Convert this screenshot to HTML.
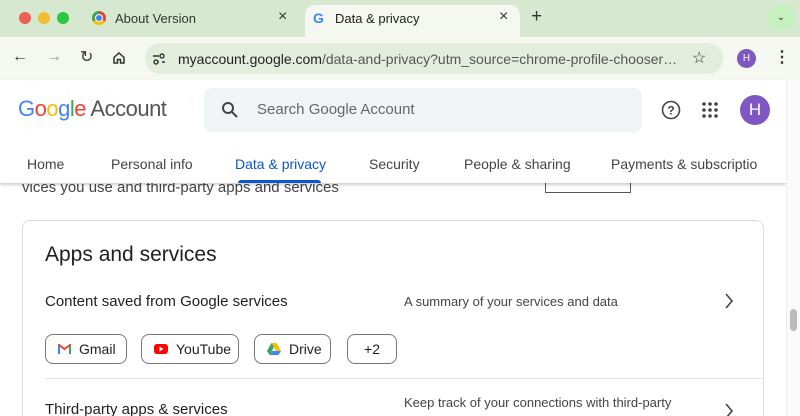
<!DOCTYPE html>
<html><head><meta charset="utf-8"><style>
*{box-sizing:border-box;margin:0;padding:0}
html,body{width:800px;height:416px;overflow:hidden}
body{font-family:"Liberation Sans",sans-serif;background:#fff;position:relative;color:#1f1f1f}
.abs{position:absolute}
.tabbar{left:0;top:0;width:800px;height:37px;background:#d6e8cf}
.toolbar{left:0;top:37px;width:800px;height:43px;background:#f4f8f0}
.dot{width:12px;height:12px;border-radius:50%;top:12px}
.tab{top:5px;height:32px;background:#f4f8f0;border-radius:10px 10px 0 0}
.omni{left:145px;top:43px;width:578px;height:31px;background:#e3eddd;border-radius:16px}
.t13{font-size:13px}
.nav{top:156px;font-size:14px;color:#444}
.chip{top:334px;height:30px;border:1px solid #747775;border-radius:8px;font-size:14px;display:flex;align-items:center;padding:0 12px;gap:8px;color:#1f1f1f}
.chip svg{flex-shrink:0}
</style></head><body>
<div class="abs tabbar"></div>
<div class="abs dot" style="left:19px;background:#ee5f57"></div>
<div class="abs dot" style="left:38px;background:#f4bc2f"></div>
<div class="abs dot" style="left:57px;background:#2ac741"></div>
<div class="abs" style="left:92px;top:11px;width:14px;height:14px;border-radius:50%;background:conic-gradient(#ea4335 0 120deg,#fbbc04 120deg 240deg,#34a853 240deg);"></div>
<div class="abs" style="left:96px;top:15px;width:6px;height:6px;border-radius:50%;background:#4285f4;box-shadow:0 0 0 1px #fff"></div>
<div class="abs t13" style="left:115px;top:11px;color:#333">About Version</div>
<div class="abs" style="left:278px;top:8px;font-size:16px;color:#333">×</div>
<div class="abs tab" style="left:305px;width:215px"></div>
<div class="abs" style="left:313px;top:10px;font-size:14px;font-weight:bold;color:#4285f4">G</div>
<div class="abs t13" style="left:335px;top:11px">Data &amp; privacy</div>
<div class="abs" style="left:499px;top:8px;font-size:16px;color:#333">×</div>
<div class="abs" style="left:531px;top:6px;font-size:19px;color:#333">+</div>
<div class="abs" style="left:768px;top:6px;width:26px;height:24px;border-radius:8px;background:#c6f0bd;text-align:center;font-size:10px;line-height:24px;color:#333">⌄</div>
<div class="abs toolbar"></div>
<div class="abs" style="left:12px;top:48px;font-size:16px;color:#333">←</div>
<div class="abs" style="left:46px;top:48px;font-size:16px;color:#999">→</div>
<div class="abs" style="left:80px;top:47px;font-size:16px;color:#333">↻</div>
<svg class="abs" style="left:112px;top:51px" width="14" height="14" viewBox="0 0 14 14"><path d="M2 6.5L7 2l5 4.5V12H8.5V8.5h-3V12H2z" fill="none" stroke="#333" stroke-width="1.5"/></svg>
<div class="abs omni"></div>
<svg class="abs" style="left:152px;top:52px" width="14" height="14" viewBox="0 0 14 14"><g stroke="#333" stroke-width="1.4" fill="none"><path d="M1 4h6M10 10h3"/><circle cx="10" cy="4" r="2"/><circle cx="4" cy="10" r="2"/><path d="M6 10h1"/></g></svg>
<div class="abs" style="left:178px;top:51px;font-size:14px;color:#1f1f1f">myaccount.google.com<span style="color:#555">/data-and-privacy?utm_source=chrome-profile-chooser…</span></div>
<div class="abs" style="left:692px;top:48px;font-size:16px;color:#333">☆</div>
<div class="abs" style="left:737px;top:49px;width:19px;height:19px;border-radius:50%;background:#7e57c2;color:#fff;font-size:10px;text-align:center;line-height:19px">H</div>
<div class="abs" style="left:774px;top:47px;font-size:16px;color:#333;font-weight:bold">⋮</div>
<!-- page -->
<div class="abs" style="left:22px;top:78px;font-size:33px;color:#ececec">Data from apps</div>
<div class="abs" style="left:22px;top:110px;font-size:33px;color:#ececec">use</div>
<div class="abs" style="left:22px;top:179px;font-size:15px;color:#444">vices you use and third-party apps and services</div>
<div class="abs" style="left:545px;top:183px;width:86px;height:10px;border:1px solid #555;border-top:none"></div>
<div class="abs" style="left:0;top:80px;width:786px;height:103px;background:rgba(255,255,255,.95);box-shadow:0 2px 3px rgba(0,0,0,.2)"></div>
<div class="abs" style="left:18px;top:96px;font-size:22px;letter-spacing:-.5px"><span style="color:#4285f4">G</span><span style="color:#ea4335">o</span><span style="color:#fbbc04">o</span><span style="color:#4285f4">g</span><span style="color:#34a853">l</span><span style="color:#ea4335">e</span> <span style="color:#555">Account</span></div>
<div class="abs" style="left:204px;top:88px;width:438px;height:44px;background:#f0f4f4;border-radius:8px"></div>
<svg class="abs" style="left:221px;top:101px" width="18" height="18" viewBox="0 0 18 18"><circle cx="7" cy="7" r="5" fill="none" stroke="#444" stroke-width="2"/><path d="M11 11l5 5" stroke="#444" stroke-width="2"/></svg>
<div class="abs" style="left:257px;top:101px;font-size:15px;color:#666">Search Google Account</div>
<svg class="abs" style="left:661px;top:100px" width="20" height="20" viewBox="0 0 20 20"><circle cx="10" cy="10" r="8.5" fill="none" stroke="#444" stroke-width="1.6"/><text x="10" y="14.5" text-anchor="middle" font-size="12" font-family="Liberation Sans" fill="#444" font-weight="bold">?</text></svg>
<svg class="abs" style="left:702px;top:102px" width="16" height="16"><g fill="#444"><circle cx="2" cy="2" r="1.8"/><circle cx="8" cy="2" r="1.8"/><circle cx="14" cy="2" r="1.8"/><circle cx="2" cy="8" r="1.8"/><circle cx="8" cy="8" r="1.8"/><circle cx="14" cy="8" r="1.8"/><circle cx="2" cy="14" r="1.8"/><circle cx="8" cy="14" r="1.8"/><circle cx="14" cy="14" r="1.8"/></g></svg>
<div class="abs" style="left:740px;top:95px;width:30px;height:30px;border-radius:50%;background:#7e57c2;color:#fff;font-size:17px;text-align:center;line-height:30px">H</div>
<div class="abs nav" style="left:27px">Home</div>
<div class="abs nav" style="left:111px">Personal info</div>
<div class="abs nav" style="left:235px;color:#0b57d0">Data &amp; privacy</div>
<div class="abs" style="left:238px;top:180px;width:83px;height:3px;background:#0b57d0;border-radius:3px 3px 0 0"></div>
<div class="abs nav" style="left:369px">Security</div>
<div class="abs nav" style="left:464px">People &amp; sharing</div>
<div class="abs nav" style="left:611px;width:147px;overflow:hidden;white-space:nowrap">Payments &amp; subscriptions</div>
<!-- card -->
<div class="abs" style="left:22px;top:220px;width:742px;height:196px;border:1px solid #dadce0;border-bottom:none;border-radius:8px 8px 0 0"></div>
<div class="abs" style="left:45px;top:243px;font-size:21px">Apps and services</div>
<div class="abs" style="left:45px;top:293px;font-size:15px">Content saved from Google services</div>
<div class="abs" style="left:404px;top:294px;font-size:13px;color:#444">A summary of your services and data</div>
<svg class="abs" style="left:724px;top:293px" width="10" height="16"><path d="M2 1l6 7-6 7" fill="none" stroke="#444" stroke-width="1.6"/></svg>
<div class="abs chip" style="left:45px;width:82px"><svg width="13" height="10" viewBox="0 0 13 10"><path d="M1 10V1l5.5 4L12 1v9" fill="none" stroke="#ea4335" stroke-width="2"/><path d="M1 10V2" stroke="#4285f4" stroke-width="2"/><path d="M12 10V2" stroke="#34a853" stroke-width="2"/></svg>Gmail</div>
<div class="abs chip" style="left:141px;width:98px"><svg width="14" height="10"><rect width="14" height="10" rx="3" fill="#f00"/><path d="M5.5 2.5v5l4-2.5z" fill="#fff"/></svg>YouTube</div>
<div class="abs chip" style="left:254px;width:77px"><svg width="14" height="12" viewBox="0 0 14 12"><path d="M4.5 0h5L14 8h-5z" fill="#fbbc04"/><path d="M4.5 0L0 8l2.5 4L7 4z" fill="#34a853"/><path d="M2.5 12h9L14 8H5z" fill="#4285f4"/></svg>Drive</div>
<div class="abs chip" style="left:347px;width:50px;justify-content:center">+2</div>
<div class="abs" style="left:45px;top:378px;width:719px;height:1px;background:#e3e3e3"></div>
<div class="abs" style="left:45px;top:401px;font-size:15px">Third-party apps &amp; services</div>
<div class="abs" style="left:404px;top:395px;font-size:13px;color:#444">Keep track of your connections with third-party</div>
<svg class="abs" style="left:724px;top:403px" width="10" height="13"><path d="M2 1l6 7-6 7" fill="none" stroke="#444" stroke-width="1.6"/></svg>
<div class="abs" style="left:786px;top:80px;width:14px;height:336px;background:#fafafa;border-left:1px solid #eee"></div>
<div class="abs" style="left:790px;top:309px;width:7px;height:22px;border-radius:4px;background:#bbb"></div>
</body></html>
